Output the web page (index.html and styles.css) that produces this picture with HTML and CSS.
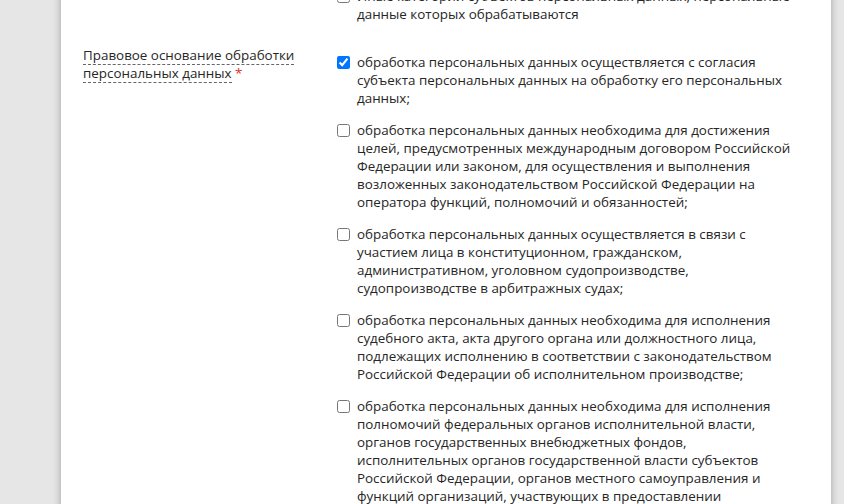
FILE: index.html
```html
<!DOCTYPE html>
<html lang="ru">

<head>
  <meta charset="UTF-8">
  <meta name="viewport" content="width=device-width, initial-scale=1.0">
  <title>Уведомление об обработке персональных данных</title>
  <link rel="stylesheet" href="styles.css">
</head>

<body>
  <div class="page">
    <div class="form-row">
      <div class="form-label"></div>
      <div class="form-options">
        <label class="option">
          <input type="checkbox">
          <span>Иные категории субъектов персональных данных, персональные данные которых обрабатываются</span>
        </label>
      </div>
    </div>

    <!-- Правовое основание -->
    <div class="form-row">
      <div class="form-label">
        <span class="hint">Правовое основание обработки персональных данных</span> <span class="required">*</span>
      </div>
      <div class="form-options">
        <label class="option">
          <input type="checkbox" checked>
          <span>обработка персональных данных осуществляется с согласия субъекта персональных данных на обработку его персональных данных;</span>
        </label>
        <label class="option">
          <input type="checkbox">
          <span>обработка персональных данных необходима для достижения целей, предусмотренных международным договором Российской Федерации или законом, для осуществления и выполнения возложенных законодательством Российской Федерации на оператора функций, полномочий и обязанностей;</span>
        </label>
        <label class="option">
          <input type="checkbox">
          <span>обработка персональных данных осуществляется в связи с участием лица в конституционном, гражданском, административном, уголовном судопроизводстве, судопроизводстве в арбитражных судах;</span>
        </label>
        <label class="option">
          <input type="checkbox">
          <span>обработка персональных данных необходима для исполнения судебного акта, акта другого органа или должностного лица, подлежащих исполнению в соответствии с законодательством Российской Федерации об исполнительном производстве;</span>
        </label>
        <label class="option">
          <input type="checkbox">
          <span>обработка персональных данных необходима для исполнения полномочий федеральных органов исполнительной власти, органов государственных внебюджетных фондов, исполнительных органов государственной власти субъектов Российской Федерации, органов местного самоуправления и функций организаций, участвующих в предоставлении государственных и муниципальных услуг;</span>
        </label>
      </div>
    </div>
  </div>
</body>

</html>
```

FILE: styles.css
```css
* {
  margin: 0;
  padding: 0;
  box-sizing: border-box;
}

html,
body {
  height: 100%;
  overflow: hidden;
}

body {
  font-family: 'Open Sans', 'Noto Sans', sans-serif;
  font-size: 13.4px;
  line-height: 18px;
  color: #262626;
  background: #e6e6e6;
}

.page {
  width: 770px;
  min-height: 1000px;
  margin: -20px 0 0 61px;
  padding: 0 22px;
  background: #fff;
  box-shadow: 0 0 8px rgba(0, 0, 0, 0.3);
}

.form-row {
  display: grid;
  grid-template-columns: 254px 1fr;
  padding-bottom: 9px;
}

.form-label {
  padding-right: 14px;
}

.hint {
  border-bottom: 1px dashed #666;
}

.required {
  color: #e0301e;
}

.form-options {
  padding-top: 7px;
  padding-right: 18px;
}

.option {
  display: flex;
  align-items: flex-start;
  gap: 7px;
  margin-bottom: 14px;
  cursor: pointer;
}

.option input {
  flex: none;
  width: 13px;
  height: 13px;
  margin: 3px 0 0 0;
}
```
